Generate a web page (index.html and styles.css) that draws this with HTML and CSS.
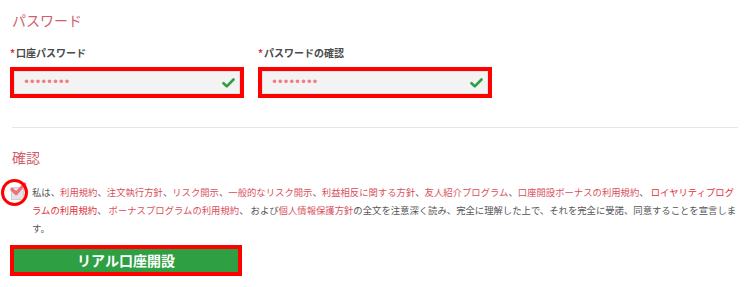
FILE: index.html
```html
<!DOCTYPE html>
<html lang="ja">
<head>
<meta charset="utf-8">
<link rel="stylesheet" href="styles.css">
</head>
<body>
<div class="page">
  <h2 class="title">パスワード</h2>
  <div class="fields">
    <div class="field">
      <div class="label"><span class="req">*</span>口座パスワード</div>
      <div class="box">
        <div class="input">
          <span class="dots">••••••••</span>
          <svg class="ok" width="13" height="10" viewBox="0 0 13 10"><path d="M1.5 5.2 L4.8 8.3 L11.5 1.5" fill="none" stroke="#2ea043" stroke-width="2.6" stroke-linecap="round" stroke-linejoin="round"/></svg>
        </div>
      </div>
    </div>
    <div class="field">
      <div class="label"><span class="req">*</span>パスワードの確認</div>
      <div class="box">
        <div class="input">
          <span class="dots">••••••••</span>
          <svg class="ok" width="13" height="10" viewBox="0 0 13 10"><path d="M1.5 5.2 L4.8 8.3 L11.5 1.5" fill="none" stroke="#2ea043" stroke-width="2.6" stroke-linecap="round" stroke-linejoin="round"/></svg>
        </div>
      </div>
    </div>
  </div>
  <hr class="divider">
  <h2 class="title confirm-title">確認</h2>
  <div class="agree">
    <div class="check-wrap">
      <svg class="checkbox" width="17" height="19" viewBox="0 0 17 19">
        <rect x="1.5" y="5.5" width="12" height="12" fill="#e4e4e4" stroke="#d0d0d0" stroke-width="1"/>
        <path d="M2 7.5 L6.2 11.5 L14.5 2" fill="none" stroke="#ef6f7c" stroke-width="3.4" stroke-linecap="round" stroke-linejoin="round"/>
      </svg>
      <span class="ring"></span>
    </div>
    <p class="text">私は、<span class="lk">利用規約</span>、<span class="lk">注文執行方針</span>、<span class="lk">リスク開示</span>、<span class="lk">一般的なリスク開示</span>、<span class="lk">利益相反に関する方針</span>、<span class="lk">友人紹介プログラム</span>、<span class="lk">口座開設ボーナスの利用規約</span>、 <span class="lk strong">ロイヤリティプログラムの利用規約</span>、 <span class="lk">ボーナスプログラムの利用規約</span>、 および<span class="lk">個人情報保護方針</span>の全文を注意深く読み、完全に理解した上で、それを完全に受諾、同意することを宣言します。</p>
  </div>
  <div class="btn-box">
    <button class="btn">リアル口座開設</button>
  </div>
</div>
</body>
</html>
```
FILE: styles.css
```css
html, body {
  margin: 0;
  padding: 0;
  background: #fff;
}
body {
  font-family: "Noto Sans CJK JP", "Liberation Sans", sans-serif;
  color: #555;
}
.page {
  padding: 10px 12px 0 10px;
}
.title {
  margin: 0 0 0 2px;
  font-size: 14px;
  line-height: 20px;
  font-weight: normal;
  color: #d2606b;
}
.fields {
  display: flex;
  gap: 14px;
  margin-top: 16px;
}
.field {
  width: 234px;
}
.label {
  font-size: 10px;
  line-height: 14px;
  font-weight: bold;
  color: #4a4a4a;
  margin-bottom: 7px;
}
.req {
  color: #e0303a;
  margin-right: 1px;
}
.box {
  border: 4px solid #f00;
  height: 23px;
}
.input {
  height: 21px;
  background: #f3f3f3;
  border: 1px solid #e2e2e2;
  display: flex;
  align-items: center;
  justify-content: space-between;
  padding: 0 4px 0 8px;
}
.dots {
  font-family: "DejaVu Sans", sans-serif;
  font-size: 12px;
  letter-spacing: -1.3px;
  color: #f07c86;
  line-height: 21px;
}
.ok {
  display: block;
}
.divider {
  border: 0;
  border-top: 1px solid #e6e6e6;
  margin: 29px 0 0 2px;
  height: 0;
}
.confirm-title {
  margin-top: 19px;
}
.agree {
  display: flex;
  margin-top: 16px;
}
.check-wrap {
  position: relative;
  width: 22px;
  flex: none;
  height: 18px;
}
.checkbox {
  position: absolute;
  left: 0;
  top: -1px;
}
.ring {
  position: absolute;
  left: -9px;
  top: -4px;
  width: 21px;
  height: 21px;
  border: 3.5px solid #f00;
  border-radius: 50%;
}
.text {
  margin: 0;
  font-size: 9.35px;
  line-height: 18px;
  color: #555;
}
.lk {
  color: #d9505c;
}
.lk.strong {
  color: #e0303a;
}
.btn-box {
  margin-top: 8px;
  width: 224px;
  border: 4px solid #f00;
}
.btn {
  display: block;
  width: 100%;
  height: 23px;
  border: 0;
  background: #2ea043;
  color: #fff;
  font-family: "Noto Sans CJK JP", sans-serif;
  font-size: 14px;
  font-weight: bold;
  line-height: 23px;
  padding: 0;
}
```
